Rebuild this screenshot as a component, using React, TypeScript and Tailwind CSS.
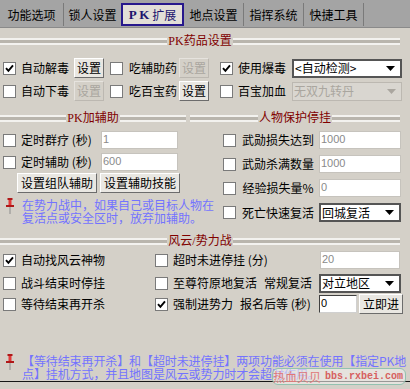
import clsx from "clsx";
import type { ReactNode } from "react";

const Check = ({ on, className }: { on?: boolean; className?: string }) => (
  <span
    className={clsx(
      "flex h-[13px] w-[13px] shrink-0 items-center justify-center border border-[#7a7a7a] bg-white",
      className
    )}
  >
    {on && (
      <svg width="9" height="9" viewBox="0 0 9 9">
        <path d="M1 4.2 L3.4 6.9 L8 1.3" fill="none" stroke="#000" strokeWidth="1.9" />
      </svg>
    )}
  </span>
);

const Btn = ({ label, off, w }: { label: string; off?: boolean; w: string }) => (
  <span
    className={clsx(
      "flex h-[20px] shrink-0 items-center justify-center border whitespace-nowrap",
      w,
      off
        ? "border-[#e6e3de] border-r-[#bcb8b1] border-b-[#bcb8b1] text-[#aaa69f]"
        : "border-white border-r-[#6c6c6c] border-b-[#6c6c6c] bg-[#e9e7e2]"
    )}
  >
    {label}
  </span>
);

const Combo = ({ text, off, w }: { text: string; off?: boolean; w: string }) => (
  <span
    className={clsx(
      "flex h-[19px] shrink-0 items-center justify-between pl-[1px] pr-[5px] whitespace-nowrap",
      w,
      off ? "border border-[#bcb8b1] bg-[#d9d6d0] text-[#aaa69f]" : "border-2 border-[#555555] bg-white"
    )}
  >
    <span>{text}</span>
    <svg width="9" height="5" viewBox="0 0 9 5">
      <path d="M0 0h9L4.5 5z" fill={off ? "#aaa69f" : "#000"} />
    </svg>
  </span>
);

const Field = ({ v, w, dark }: { v: string; w: string; dark?: boolean }) => (
  <span
    className={clsx(
      "block h-[18px] shrink-0 bg-white pl-[1px] pt-[1px] font-['Liberation_Sans',sans-serif] text-[11px] leading-[12px]",
      w,
      dark
        ? "border border-[#404040] border-r-[#d0d0d0] border-b-[#d0d0d0] text-black"
        : "border border-[#c6c3bd] text-[#8a8a8a]"
    )}
  >
    {v}
  </span>
);

const Groove = () => <span className="h-[7px] flex-1 border-y-2 border-[#f3f2ef] bg-[#b9b5ad]" />;

const Head = ({ t, w }: { t: string; w: string }) => (
  <div className={clsx("flex h-[14px] items-center", w)}>
    <Groove />
    <span className="px-[1px] whitespace-nowrap font-['Liberation_Serif','Noto_Sans_CJK_SC',serif] text-[#800000]">
      {t}
    </span>
    <Groove />
  </div>
);

const Pin = () => (
  <svg width="8" height="17" viewBox="0 0 8 17" className="shrink-0">
    <rect x="1.5" y="0" width="5" height="2" fill="#b01818" />
    <rect x="2.5" y="2" width="3" height="5" fill="#e23a3a" />
    <rect x="0" y="7" width="8" height="2" fill="#b01818" />
    <rect x="3.5" y="9" width="1" height="7" fill="#8c8c8c" />
  </svg>
);

const Tab = ({ w, children }: { w: string; children: ReactNode }) => (
  <span className={clsx("flex h-[23px] items-center justify-center whitespace-nowrap", w)}>{children}</span>
);

const Sep = () => <span className="h-[23px] w-px bg-[#7a7a7a]" />;

export default function App() {
  return (
    <div className="relative h-[389px] w-[410px] overflow-hidden bg-[#d4d0c8] font-['Noto_Sans_CJK_SC',sans-serif] text-[12px] leading-[14px] text-black">
      {/* tabs */}
      <div className="flex h-[28px] items-start border-b border-[#8a8a8a] bg-[#a4a4a4] pt-[3px]">
        <Tab w="w-[63px]">功能选项</Tab>
        <Sep />
        <Tab w="w-[57px]">锁人设置</Tab>
        <span className="flex h-[23px] w-[63px] items-center justify-center border-2 border-[#27188c] bg-[#e2ded7] text-[#20146e]">
          <span className="font-['Liberation_Serif',serif] text-[13px] font-bold">P K</span>
          <span className="ml-[3px]">扩展</span>
        </span>
        <Tab w="w-[59px]">地点设置</Tab>
        <Sep />
        <Tab w="w-[59px]">指挥系统</Tab>
        <Sep />
        <Tab w="w-[59px]">快捷工具</Tab>
        <Sep />
      </div>

      {/* PK药品设置 */}
      <div className="mt-[6px]">
        <Head t="PK药品设置" w="w-[400px]" />
      </div>
      <div className="mt-[10px] flex h-[20px] items-center pl-[3px]">
        <Check on />
        <span className="ml-[5px] w-[48px] whitespace-nowrap">自动解毒</span>
        <Btn label="设置" w="ml-[5px] w-[30px]" />
        <Check className="ml-[6px]" />
        <span className="ml-[6px] w-[48px] whitespace-nowrap">吃辅助药</span>
        <Btn label="设置" off w="ml-[2px] w-[30px]" />
        <Check on className="ml-[11px]" />
        <span className="ml-[5px] w-[48px] whitespace-nowrap">使用爆毒</span>
        <Combo text="<自动检测>" w="ml-[6px] w-[110px]" />
      </div>
      <div className="mt-[3px] flex h-[20px] items-center pl-[3px]">
        <Check />
        <span className="ml-[5px] w-[48px] whitespace-nowrap">自动下毒</span>
        <Btn label="设置" off w="ml-[5px] w-[30px]" />
        <Check className="ml-[6px]" />
        <span className="ml-[6px] w-[48px] whitespace-nowrap">吃百宝药</span>
        <Btn label="设置" w="ml-[2px] w-[30px]" />
        <Check className="ml-[11px]" />
        <span className="ml-[5px] w-[48px] whitespace-nowrap">百宝加血</span>
        <Combo text="无双九转丹" off w="ml-[6px] w-[110px]" />
      </div>

      {/* PK加辅助 / 人物保护停挂 */}
      <div className="mt-[10px] flex gap-[4px]">
        <Head t="PK加辅助" w="w-[186px]" />
        <Head t="人物保护停挂" w="w-[210px]" />
      </div>
      <div className="mt-[6px] flex">
        <div className="w-[190px]">
          <div className="flex h-[18px] items-center pl-[3px]">
            <Check />
            <span className="ml-[5px] w-[75px] whitespace-nowrap">定时群疗 (秒)</span>
            <Field v="1" w="ml-[5px] w-[77px]" />
          </div>
          <div className="mt-[4px] flex h-[18px] items-center pl-[3px]">
            <Check />
            <span className="ml-[5px] w-[75px] whitespace-nowrap">定时辅助 (秒)</span>
            <Field v="600" w="ml-[5px] w-[77px]" />
          </div>
          <div className="mt-[2px] flex pl-[17px]">
            <Btn label="设置组队辅助" w="w-[80px]" />
            <Btn label="设置辅助技能" w="ml-[3px] w-[80px]" />
          </div>
          <div className="mt-[5px] flex pl-[6px]">
            <Pin />
            <p className="ml-[8px] whitespace-nowrap leading-[13px] text-[#7373ff]">
              在势力战中，如果自己或目标人物在
              <br />
              复活点或安全区时，放弃加辅助。
            </p>
          </div>
        </div>
        <div>
          <div className="flex h-[18px] items-center pl-[33px]">
            <Check />
            <span className="ml-[6px] w-[72px] whitespace-nowrap text-center">武勋损失达到</span>
            <Field v="1000" w="ml-[5px] w-[82px]" />
          </div>
          <div className="mt-[6px] flex h-[18px] items-center pl-[33px]">
            <Check />
            <span className="ml-[6px] w-[72px] whitespace-nowrap text-center">武勋杀满数量</span>
            <Field v="1000" w="ml-[5px] w-[82px]" />
          </div>
          <div className="mt-[6px] flex h-[18px] items-center pl-[33px]">
            <Check />
            <span className="ml-[6px] w-[72px] whitespace-nowrap text-center">经验损失量%</span>
            <Field v="0" w="ml-[5px] w-[82px]" />
          </div>
          <div className="mt-[6px] flex h-[19px] items-center pl-[33px]">
            <Check />
            <span className="ml-[6px] w-[72px] whitespace-nowrap text-center">死亡快速复活</span>
            <Combo text="回城复活" w="ml-[5px] w-[82px]" />
          </div>
        </div>
      </div>

      {/* 风云/势力战 */}
      <div className="mt-[10px]">
        <Head t="风云/势力战" w="w-[400px]" />
      </div>
      <div className="mt-[3px] flex h-[18px] items-center pl-[3px]">
        <div className="flex w-[152px] items-center">
          <Check on />
          <span className="ml-[5px] whitespace-nowrap">自动找风云神物</span>
        </div>
        <div className="flex w-[165px] items-center">
          <Check />
          <span className="ml-[5px] whitespace-nowrap">超时未进停挂 (分)</span>
        </div>
        <Field v="20" w="w-[80px]" />
      </div>
      <div className="mt-[4px] flex h-[20px] items-center pl-[3px]">
        <div className="flex w-[152px] items-center">
          <Check />
          <span className="ml-[5px] whitespace-nowrap">战斗结束时停挂</span>
        </div>
        <div className="flex w-[164px] items-center">
          <Check />
          <span className="ml-[5px] whitespace-nowrap">至尊符原地复活</span>
          <span className="ml-[7px] whitespace-nowrap">常规复活</span>
        </div>
        <Combo text="对立地区" w="w-[82px]" />
      </div>
      <div className="mt-[1px] flex h-[20px] items-center pl-[3px]">
        <div className="flex w-[152px] items-center">
          <Check />
          <span className="ml-[5px] whitespace-nowrap">等待结束再开杀</span>
        </div>
        <div className="flex w-[164px] items-center">
          <Check on />
          <span className="ml-[5px] whitespace-nowrap">强制进势力</span>
          <span className="ml-[7px] whitespace-nowrap">报名后等 (秒)</span>
        </div>
        <Field v="0" dark w="w-[38px]" />
        <Btn label="立即进" w="ml-[2px] w-[44px]" />
      </div>

      <div className="mt-[40px] flex pl-[6px]">
        <Pin />
        <p className="ml-[8px] whitespace-nowrap leading-[13px] tracking-[-0.1px] text-[#7373ff]">
          【等待结束再开杀】和【超时未进停挂】两项功能必须在使用【指定PK地
          <br />
          点】挂机方式，并且地图是风云或势力时才会超时作用。
        </p>
      </div>
      <div className="mt-[1px] h-[8px] border-t border-[#161616]" />

      {/* watermark */}
      <div className="absolute left-[272px] top-[368px] flex h-[17px] w-[134px] items-center rounded-[6px] border border-[#93c2b0] bg-[#f2f0ec]/60">
        <span className="text-[12px] leading-[12px] text-[#e07878]">热血贝贝</span>
        <span className="ml-[4px] font-['Liberation_Mono',monospace] text-[10px] font-bold leading-[12px] text-[#d65f5f]">
          bbs.rxbei.com
        </span>
      </div>
    </div>
  );
}
